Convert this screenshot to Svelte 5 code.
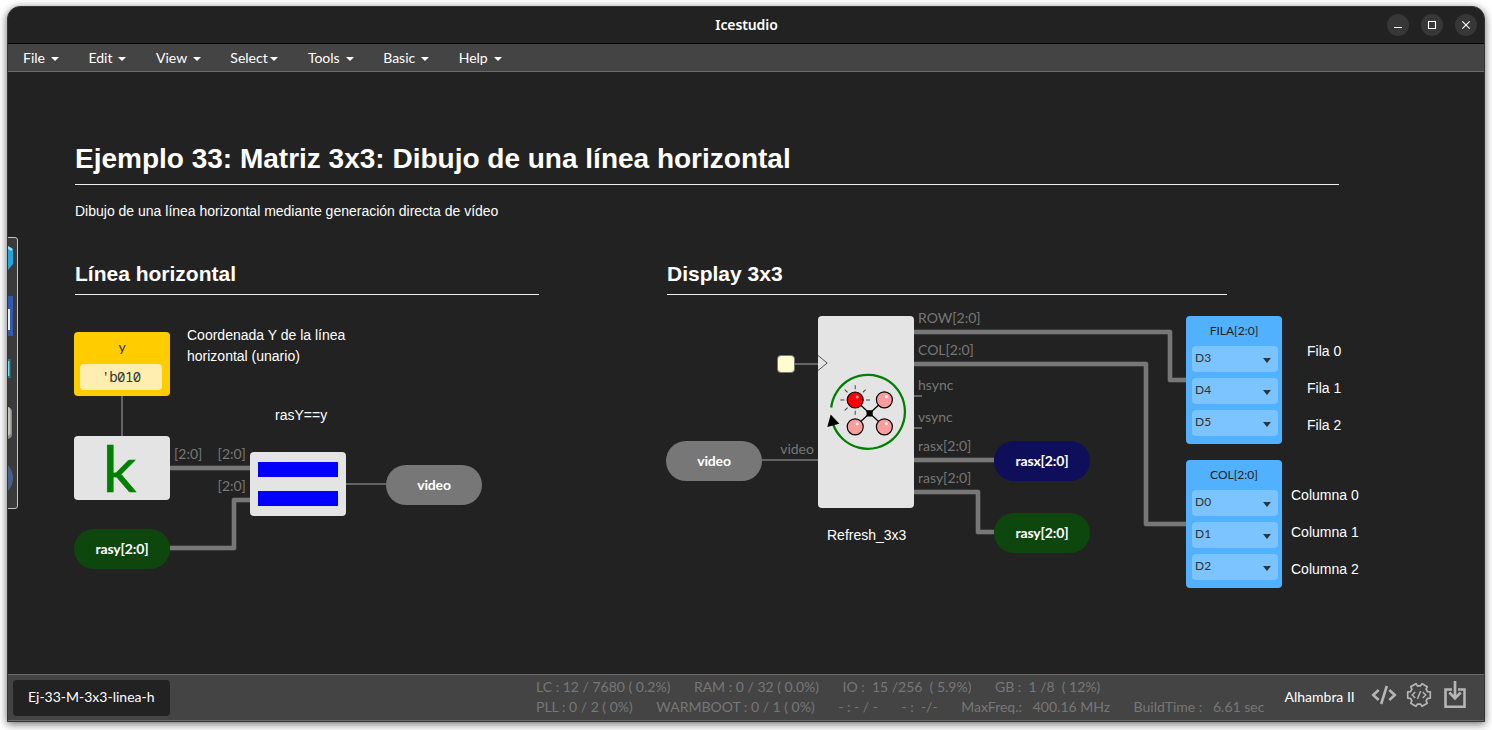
<script>
  const menus = [
    { name: 'File' }, { name: 'Edit' }, { name: 'View' },
    { name: 'Select', tight: true },
    { name: 'Tools' }, { name: 'Basic' }, { name: 'Help' }
  ];

  const buses = [
    'M170 468H250', 'M170 548H234V500H250', 'M914 332H1170V380H1186',
    'M914 364H1146V524H1186', 'M914 460H994', 'M914 492H978V532H994'
  ];
  const wires = ['M122 396V436', 'M346 484H386', 'M762 460H818', 'M795 364H818', 'M914 396H922', 'M914 428H922'];

  const ports = [
    { x: 174, y: 459, t: '[2:0]' }, { x: 217.6, y: 459, t: '[2:0]' }, { x: 217.6, y: 491, t: '[2:0]' },
    { x: 780.2, y: 454, t: 'video' }, { x: 918, y: 323, t: 'ROW[2:0]' }, { x: 918, y: 355, t: 'COL[2:0]' },
    { x: 918, y: 390, t: 'hsync' }, { x: 918, y: 422, t: 'vsync' },
    { x: 918, y: 451, t: 'rasx[2:0]' }, { x: 918, y: 483, t: 'rasy[2:0]' }
  ];

  const notes = [
    { x: 75, y: 201, t: 'Dibujo de una línea horizontal mediante generación directa de vídeo' },
    { x: 187, y: 325, t: 'Coordenada Y de la línea\nhorizontal (unario)' },
    { x: 275, y: 405, t: 'rasY==y' }, { x: 827, y: 525, t: 'Refresh_3x3' },
    { x: 1307, y: 341, t: 'Fila 0' }, { x: 1307, y: 378, t: 'Fila 1' }, { x: 1307, y: 415, t: 'Fila 2' },
    { x: 1291, y: 485, t: 'Columna 0' }, { x: 1291, y: 522, t: 'Columna 1' }, { x: 1291, y: 559, t: 'Columna 2' }
  ];

  const pills = [
    { x: 74, y: 529, t: 'rasy[2:0]', kind: 'green' }, { x: 386, y: 465, t: 'video', kind: 'gray' },
    { x: 666, y: 441, t: 'video', kind: 'gray' }, { x: 994, y: 441, t: 'rasx[2:0]', kind: 'navy' },
    { x: 994, y: 513, t: 'rasy[2:0]', kind: 'green' }
  ];

  const outputs = [
    { x: 1186, y: 316, name: 'FILA[2:0]', pins: ['D3', 'D4', 'D5'] },
    { x: 1186, y: 460, name: 'COL[2:0]', pins: ['D0', 'D1', 'D2'] }
  ];

  const leds = [[855.2, 400, true], [884.4, 399.8], [855.2, 426.8], [884.4, 426.8]];
  const rays = [0, 90, 135, 180, 225, 270, 315];

  // Six-toothed gear outline, one tooth every 60 degrees.
  const gear = [0, 60, 120, 180, 240, 300]
    .flatMap((t) => [[t - 15, 11.7], [t + 15, 11.7], [t + 21, 9.2], [t + 39, 9.2]])
    .map(([a, r]) => {
      const rad = (a * Math.PI) / 180;
      return `${(13 + r * Math.cos(rad)).toFixed(2)},${(13 + r * Math.sin(rad)).toFixed(2)}`;
    })
    .join(' ');

  const stats = [
    ['LC : 12 / 7680 ( 0.2%)', 'RAM : 0 / 32 ( 0.0%)', 'IO :  15 /256  ( 5.9%)', 'GB :  1 /8  ( 12%)'],
    ['PLL : 0 / 2 ( 0%)', 'WARMBOOT : 0 / 1 ( 0%)', '- : - / -', '- :  -/-', 'MaxFreq.:   400.16 MHz', 'BuildTime :   6.61 sec']
  ];

  // Diagram coordinates start at the canvas' upper-left corner (8, 72).
  const at = (n) => `left:${n.x - 8}px;top:${n.y - 72}px`;
</script>

<div class="desktop">
<div class="window">
  <header>
    <span class="title">Icestudio</span>
    <div class="controls">
      <svg viewBox="0 0 22 22"><path d="M7 13.5h8" /></svg>
      <svg viewBox="0 0 22 22"><path d="M7.5 7.5h7v7h-7z" /></svg>
      <svg viewBox="0 0 22 22"><path d="M7.3 7.3l7.4 7.4M14.7 7.3l-7.4 7.4" /></svg>
    </div>
  </header>

  <nav>
    {#each menus as m}
      <div class="menu" class:tight={m.tight}><span>{m.name}</span><i></i></div>
    {/each}
  </nav>

  <main>
    <svg class="wires" viewBox="8 72 1476 602">
      {#each buses as d}<path {d} class="edge" /><path {d} class="bus" />{/each}
      {#each wires as d}<path {d} class="thin" />{/each}
      {#each ports as p}<text x={p.x} y={p.y}>{p.t}</text>{/each}
    </svg>

    <h1 class="free" style={at({ x: 75, y: 139 })}>Ejemplo 33: Matriz 3x3: Dibujo de una línea horizontal</h1>
    <h2 class="free left" style={at({ x: 75, y: 259 })}>Línea horizontal</h2>
    <h2 class="free right" style={at({ x: 667, y: 259 })}>Display 3x3</h2>
    {#each notes as n}<p class="free note" style={at(n)}>{n.t}</p>{/each}

    <div class="free constant" style={at({ x: 74, y: 332 })}><span>y</span><b>'b010</b></div>
    <div class="free block" style={at({ x: 74, y: 436 })}>
      <svg class="kbox" viewBox="0 0 96 64" width="96" height="64"><text class="k" x="28.4" y="56" textLength="34" lengthAdjust="spacingAndGlyphs">k</text></svg>
    </div>
    <div class="free block equals" style={at({ x: 250, y: 452 })}><i></i><i></i></div>
    <div class="free block tall" style={at({ x: 818, y: 316 })}>
      <svg viewBox="818 316 96 192" width="96" height="192">
        <path d="M818 355.5l9.2 7.5-9.2 7.5" fill="none" stroke="#555" />
        <path d="M831.2 407.5A37 37 0 1 1 833.2 424.5" fill="none" stroke="#008000" stroke-width="2.3" />
        <path d="M830.7 414.5l8.6 9.2-12 3.3z" fill="#000" />
        <path d="M855 400l29.4 26.8M884.4 399.8L855 426.8" stroke="#000" stroke-width="1.2" />
        <rect x="866.5" y="410.2" width="6.2" height="6.2" rx="1" fill="#000" />
        {#each rays as a}
          <path d="M866 400h4" transform="rotate({a} 855.2 400)" stroke="#444" stroke-width="1" />
        {/each}
        {#each leds as [cx, cy, on]}
          <circle {cx} {cy} r="8" fill={on ? '#f00' : '#fb9d9d'} stroke="#000" stroke-width="1.2" />
          <circle cx={cx + 2} cy={cy - 3} r="1.5" fill={on ? '#ff9b9b' : '#fff'} />
        {/each}
      </svg>
    </div>
    <div class="free clock" style={at({ x: 777, y: 355 })}></div>

    {#each pills as p}<div class="free pill {p.kind}" style={at(p)}>{p.t}</div>{/each}

    {#each outputs as o}
      <div class="free output" style={at(o)}>
        <span>{o.name}</span>
        {#each o.pins as pin}<div class="pin">{pin}<i></i></div>{/each}
      </div>
    {/each}

    <svg class="dock" viewBox="0 0 11 272" width="11" height="272">
      <path d="M-1 .5H7a2.5 2.5 0 0 1 2.5 2.5V269a2.5 2.5 0 0 1-2.5 2.5H-1z" fill="#3a3a3a" stroke="#c4c4c4" />
      <path d="M0 9l5 4v14l-5 6z" fill="#22a7e0" /><path d="M0 9l5 3-2 2-3-2z" fill="#8ce2f2" />
      <path d="M0 59h5v40H0z" fill="#305bae" /><path d="M0 72h2v21H0z" fill="#e9eef7" />
      <path d="M0 122h2.5v19H0z" fill="#247e98" /><path d="M0 124h1.3v15H0z" fill="#83d9ec" />
      <path d="M0 170q4 1 4 5v22q0 4-4 5z" fill="#8e8e88" /><path d="M0 170q2 0 2.5 4v22q-1 3-2.5 3z" fill="#c2c2bc" />
      <path d="M0 228q5 6 5 13t-5 13z" fill="#48608c" />
    </svg>
  </main>

  <footer>
    <div class="tab">Ej-33-M-3x3-linea-h</div>
    <div class="stats">
      {#each stats as row}<div class="row">{#each row as s}<span>{s}</span>{/each}</div>{/each}
    </div>
    <div class="board">Alhambra II</div>
    <div class="tools">
      <svg width="26" height="22" viewBox="0 0 26 22"><path d="M7.7 6L2.2 11l5.5 5M18.3 6l5.5 5-5.5 5M15.8 2L10.2 20" stroke-width="2.6" /></svg>
      <svg class="gear" width="26" height="26" viewBox="0 0 26 26">
        <polygon points={gear} stroke-width="1.7" stroke-linejoin="round" />
        <path d="M9.3 10L6.2 13l3.1 3M16.7 10l3.1 3-3.1 3M14.6 9l-3.2 8" stroke-width="1.5" />
      </svg>
      <svg class="load" width="22" height="30" viewBox="0 0 22 30"><path d="M8 9.5H1.5v17.2h19V9.5H14" stroke-width="2.6" /><path d="M11 1v17M5.3 12.5L11 18.3l5.7-5.8" stroke-width="2.7" /></svg>
    </div>
  </footer>
</div>
</div>

<style>
  :global(body) { background: #fff; }
  .desktop { box-sizing: border-box; width: 1492px; height: 730px; padding: 6px 7px 8px; overflow: hidden; }
  .window {
    box-sizing: border-box; width: 1478px; height: 716px;
    border: 1px solid #343635; border-radius: 13px 13px 0 0; overflow: hidden;
    display: flex; flex-direction: column; background: #222;
    font-family: Lato, sans-serif; font-size: 14px; color: #fff;
    box-shadow: 0 2px 8px rgba(0, 0, 0, .6);
  }
  header {
    box-sizing: border-box; height: 37px; flex: none; border-bottom: 1px solid #000;
    display: grid; grid-template-columns: 1fr auto 1fr; align-items: center;
  }
  .title { grid-column: 2; font: 600 14px/20px "Noto Sans", sans-serif; letter-spacing: -.1px; padding-left: 1px; }
  .controls { justify-self: end; display: flex; gap: 12px; padding-right: 7px; }
  .controls svg { width: 22px; height: 22px; border-radius: 50%; background: #373737; fill: none; stroke: #fff; stroke-width: 1.1; }
  nav {
    box-sizing: border-box; height: 28px; flex: none; display: flex;
    background: #444; border-bottom: 1px solid #6a6a6a;
  }
  .menu { display: flex; align-items: center; gap: 6px; padding: 0 14.5px 0 15px; height: 27px; }
  .menu span { line-height: 17px; margin-top: -1px; }
  .tight { gap: 2px; padding: 0 15.2px 0 14.7px; }
  .menu i { border: 4px solid transparent; border-top-color: #fff; border-bottom: 0; margin-top: 2px; }
  main { position: relative; flex: none; height: 602px; overflow: hidden; }
  .free { position: absolute; margin: 0; box-sizing: border-box; }
  .wires { display: block; width: 1476px; height: 602px; fill: none; }
  .wires text { fill: #777; font-size: 14px; }
  .edge { stroke: #555; stroke-width: 5; stroke-linejoin: round; }
  .bus { stroke: #777; stroke-width: 4; stroke-linejoin: round; }
  .thin { stroke: #777; stroke-width: 1.6; }
  h1, h2, .note { font-family: "Liberation Sans", Arial, sans-serif; white-space: pre; }
  h1 { width: 1264px; height: 46px; border-bottom: 1px solid #eee; font-size: 28px; line-height: 39px; }
  h2 { height: 36px; border-bottom: 1px solid #eee; font-size: 21px; line-height: 30px; }
  .left { width: 464px; }
  .right { width: 560px; }
  .note { font-size: 14px; line-height: 21px; }
  .constant {
    width: 96px; height: 64px; padding: 6px 8px 6px 6px; border-radius: 4px; background: #fc0; color: #333;
    display: flex; flex-direction: column;
  }
  .constant span { width: 84px; height: 26px; line-height: 17px; text-align: center; }
  .constant b {
    width: 82px; height: 26px; border-radius: 4px; background: #ffeeaf; text-align: center;
    font: 14px/26px "Noto Sans Mono", "DejaVu Sans Mono", "Liberation Mono", monospace;
    letter-spacing: -.6px;
  }
  .block { width: 96px; height: 64px; border-radius: 4px; background: #e4e4e4; }
  .block svg { display: block; }
  .block .kbox { overflow: visible; }
  .k { font-size: 63.5px; fill: #008000; stroke: #008000; stroke-width: .5px; }
  .equals { display: flex; flex-direction: column; gap: 14px; padding: 10px 8px; }
  .equals i { height: 15px; background: #00f; }
  .tall { height: 192px; }
  .clock { width: 18px; height: 18px; border-radius: 4px; background: #fffdcf; border: 1px solid #777; }
  .pill { width: 96px; height: 40px; border-radius: 20px; text-align: center; font-weight: bold; line-height: 40px; letter-spacing: -.15px; }
  .gray { background: #777; }
  .green { background: #0e470e; }
  .navy { background: #0e0e5b; }
  .output {
    width: 96px; height: 128px; border-radius: 4px; background: #51b1ff; color: #333;
    padding: 6px 4px 6px 6px; display: flex; flex-direction: column; gap: 6px; font-size: 12px;
  }
  .output span { height: 18px; line-height: 17px; padding-right: 2px; text-align: center; color: #222; }
  .pin {
    box-sizing: border-box; height: 26px; border-radius: 4px; background: #7bc4ff;
    display: flex; justify-content: space-between; align-items: center; padding: 0 7px 4px 3px;
  }
  .pin i { border: 4px solid transparent; border-top: 5px solid #333; border-bottom: 0; margin-top: 7px; }
  .dock { position: absolute; left: 0; top: 165px; }
  footer {
    box-sizing: border-box; height: 47px; flex: none; display: flex; align-items: center;
    background: #444; border-top: 1px solid #6a6a6a; border-bottom: 1px solid #6a6a6a; padding-left: 5px;
  }
  .tab { box-sizing: border-box; width: 157px; height: 36px; padding-left: 15px; line-height: 33px; border-radius: 4px; background: #222; flex: none; }
  .stats { margin-left: 366px; width: 748.5px; color: #777; line-height: 20px; flex: none; padding-bottom: 1px; }
  .row { display: flex; gap: 23.5px; white-space: pre; }
  .board { width: 86.5px; flex: none; padding-bottom: 3px; }
  .tools { display: flex; align-items: center; gap: 9px; padding-bottom: 5px; }
  .tools svg { fill: none; stroke: #b5b5b5; flex: none; }
  .tools .load { margin-left: 3px; }
</style>
